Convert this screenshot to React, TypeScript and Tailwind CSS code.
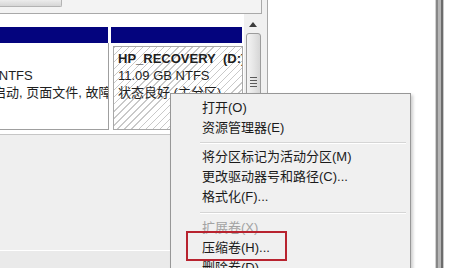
const font = "font-[family-name:'Liberation_Sans','Noto_Sans_CJK_SC',sans-serif]";

const MenuItem = ({ label, disabled }: { label: string; disabled?: boolean }) => (
  <div
    className={`h-[20px] leading-[20px] pl-[31px] whitespace-nowrap ${
      disabled ? "text-[#a3a3a3]" : "text-[#1b1b1b]"
    }`}
  >
    {label}
  </div>
);

const Separator = ({ height }: { height: string }) => (
  <div className={`${height} flex items-center pl-[29px] pr-[4px]`}>
    <div className="w-full h-[2px] border-t border-t-[#d5d5d5] border-b border-b-white" />
  </div>
);

const ScrollBar = () => (
  <div className="w-[18px] bg-[#f0f0f0] flex flex-col items-center">
    <svg width="8" height="5" viewBox="0 0 8 5" className="mt-[8px]">
      <path d="M4 0 L8 5 L0 5 Z" fill="#3c3c3c" />
    </svg>
    <div className="mt-[6px] w-[15px] flex-1 rounded-t-[3px] border border-[#9c9c9c] bg-gradient-to-r from-[#f4f4f4] via-[#e6e6e6] to-[#d6d6d6] flex flex-col items-center pt-[43px] gap-[2px]">
      <div className="w-[7px] h-px bg-[#5a5a5a]" />
      <div className="w-[7px] h-px bg-[#5a5a5a]" />
      <div className="w-[7px] h-px bg-[#5a5a5a]" />
      <div className="w-[7px] h-px bg-[#5a5a5a]" />
    </div>
  </div>
);

const DiskPanel = () => (
  <div className="w-[268px] h-full flex flex-col border-r border-[#a8a8a8] bg-[#f0f0f0]">
    <div className="h-[14px] flex">
      <div className="w-[262px] border-b border-r border-[#a9a9a9] bg-[#f3f3f3]">
        <div className="w-[62px] h-[7px] bg-gradient-to-b from-[#ececec] to-[#d6d6d6] border-b border-r border-[#b3b3b3] rounded-br-[2px]" />
      </div>
    </div>

    <div className="h-[120px] flex">
      <div className="w-[244px] bg-white flex flex-col pt-[13px]">
        <div className="h-[16px] flex gap-[3px]">
          <div className="w-[108px] bg-[#04047e]" />
          <div className="w-[131px] bg-[#04047e]" />
        </div>
        <div className="h-[87px] flex gap-[3px] text-[13px] leading-[17px] text-[#1e1e1e]">
          <div className="w-[109px] border-r border-b border-[#9f9f9f] overflow-hidden pt-[7px] whitespace-nowrap">
            <div>&nbsp;</div>
            <div className="ml-[-67px]">465.65 GB NTFS</div>
            <div className="ml-[-67px]">状态良好 (启动, 页面文件, 故障转储, 主分区)</div>
          </div>
          <div className="w-[130px] ml-[1px] mt-[3px] border border-[#a8a8a8] overflow-hidden whitespace-nowrap pl-[4px] pt-[3px] bg-[repeating-linear-gradient(135deg,#c9c9c9_0px,#c9c9c9_1px,#ffffff_1px,#ffffff_5px)]">
            <div className="font-bold">HP_RECOVERY&nbsp;&nbsp;(D:)</div>
            <div>11.09 GB NTFS</div>
            <div>状态良好 (主分区)</div>
          </div>
        </div>
      </div>
      <ScrollBar />
      <div className="flex-1 bg-[#f0f0f0]" />
    </div>

    <div className="flex-1 flex flex-col border-t border-[#c6c6c6]">
      <div className="h-[115px] bg-[#efefef]" />
      <div className="h-px bg-white" />
      <div className="flex-1 bg-[#eaeaea]" />
    </div>
  </div>
);

const ContextMenu = () => (
  <div className="absolute left-[170px] top-[93px] w-[241px] h-[200px] border border-[#979797] bg-[#f0f0f0] pt-[4px] text-[13px] shadow-[2px_2px_3px_rgba(0,0,0,0.2)]">
    <MenuItem label="打开(O)" />
    <MenuItem label="资源管理器(E)" />
    <Separator height="h-[9px]" />
    <MenuItem label="将分区标记为活动分区(M)" />
    <MenuItem label="更改驱动器号和路径(C)..." />
    <MenuItem label="格式化(F)..." />
    <Separator height="h-[11px]" />
    <MenuItem label="扩展卷(X)" disabled />
    <MenuItem label="压缩卷(H)..." />
    <MenuItem label="删除卷(D)..." />
  </div>
);

export default function App() {
  return (
    <div className={`relative w-[475px] h-[268px] overflow-hidden bg-white flex ${font}`}>
      <DiskPanel />
      <div className="w-[167px] bg-white" />
      <div className="w-[9px] flex">
        <div className="w-px bg-[#d2d2d2]" />
        <div className="w-[2px] bg-[#878787]" />
        <div className="w-[3px] bg-[#b6b6b6]" />
        <div className="w-[2px] bg-[#6c6c6c]" />
        <div className="w-px bg-[#cacaca]" />
      </div>
      <div className="flex-1 bg-white" />

      <ContextMenu />
      <div className="absolute left-[186px] top-[231px] w-[101px] h-[30px] border-2 border-[#b8232f]" />
    </div>
  );
}
